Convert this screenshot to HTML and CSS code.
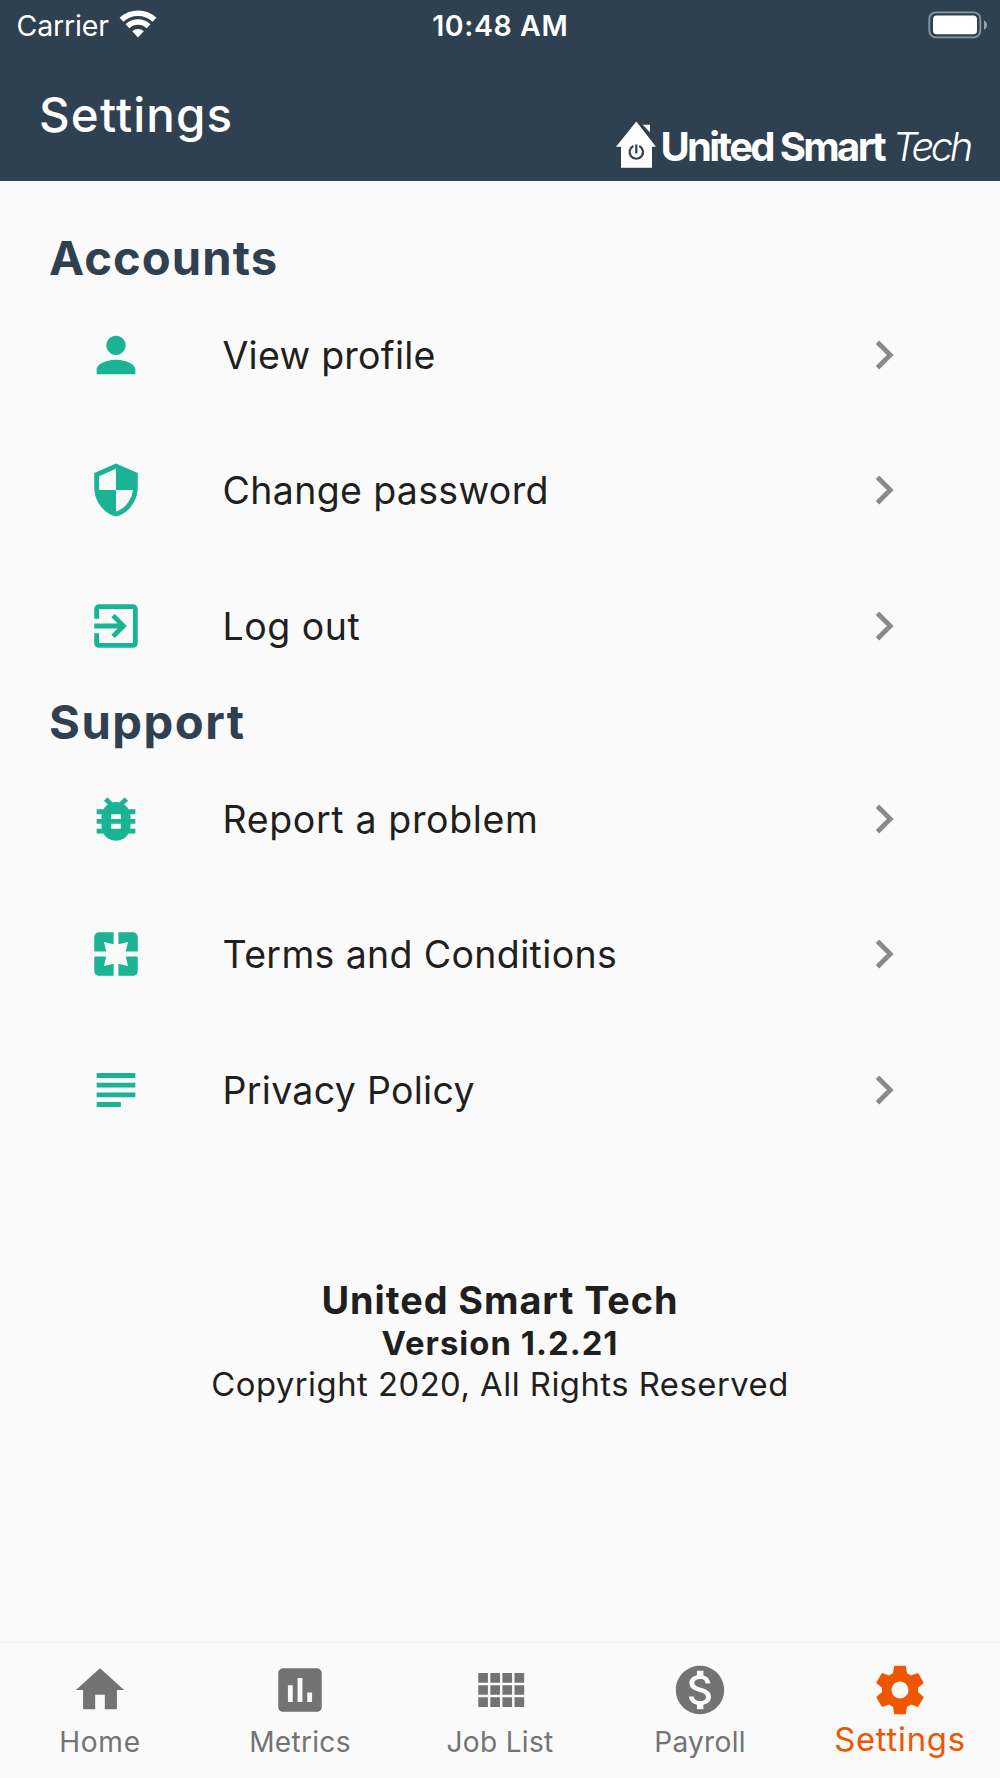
FILE: index.html
```html
<!DOCTYPE html>
<html lang="en">
<head>
<meta charset="utf-8">
<title>Settings</title>
<link rel="stylesheet" href="styles.css">
</head>
<body>
<div class="screen">
  <header class="header">
    <div class="status">
      <div class="status-left">
        <span class="carrier">Carrier</span>
        <svg class="wifi" viewBox="0 0 38 28" aria-hidden="true">
          <path d="M2.5 9.8A24.2 24.2 0 0 1 35.5 9.8M8.5 16.2A15.4 15.4 0 0 1 29.5 16.2" fill="none" stroke="#fff" stroke-width="5.6"/>
          <path d="M19 27.5L13.2 21.3A8.5 8.5 0 0 1 24.8 21.3Z" fill="#fff"/>
        </svg>
      </div>
      <span class="clock">10:48 AM</span>
      <div class="status-right">
        <svg class="battery" viewBox="0 0 60 28" aria-hidden="true">
          <rect x="1.3" y="1.3" width="51" height="25" rx="6.5" fill="none" stroke="#fff" stroke-opacity=".45" stroke-width="1.8"/>
          <rect x="5" y="4.6" width="44" height="18.6" rx="3.8" fill="#fff"/>
          <path d="M56 9.200c4 2 4 7.600 0 9.600z" fill="#fff" fill-opacity=".5"/>
        </svg>
      </div>
    </div>
    <div class="appbar">
      <h1 class="title">Settings</h1>
      <div class="brand">
        <svg class="house" viewBox="0 0 40 47" aria-hidden="true">
          <path d="M20.300.5L40 25.800H36V46.800H5V25.800H0Z" fill="#fff"/>
          <path d="M26.800 3.800H34V11.600Z" fill="#fff"/>
          <path d="M17.400 25A6.700 6.700 0 1 0 23.200 25M20.300 23.500V32.500" fill="none" stroke="#2f4050" stroke-width="2.200"/>
        </svg>
        <span class="brand-name">United Smart</span>
        <span class="brand-tech">Tech</span>
      </div>
    </div>
  </header>

  <main class="content">
    <h2 class="section accounts">Accounts</h2>
    <ul class="list">
      <li class="row">
        <svg class="icon" viewBox="0 0 24 24"><path d="M12 12c2.210 0 4-1.790 4-4s-1.790-4-4-4-4 1.790-4 4 1.790 4 4 4zm0 2c-2.670 0-8 1.340-8 4v2h16v-2c0-2.660-5.330-4-8-4z"/></svg>
        <span class="label view">View profile</span>
        <svg class="chevron" viewBox="0 0 24 24"><path d="M10 6L8.590 7.410 13.170 12l-4.580 4.590L10 18l6-6z"/></svg>
      </li>
      <li class="row">
        <svg class="icon" viewBox="0 0 24 24"><path d="M12 1L3 5v6c0 5.550 3.840 10.740 9 12 5.160-1.260 9-6.450 9-12V5l-9-4zm0 10.990h7c-.53 4.120-3.280 7.790-7 8.940V12H5V6.300l7-3.110v8.800z"/></svg>
        <span class="label change">Change password</span>
        <svg class="chevron" viewBox="0 0 24 24"><path d="M10 6L8.590 7.410 13.170 12l-4.580 4.590L10 18l6-6z"/></svg>
      </li>
      <li class="row">
        <svg class="icon" viewBox="0 0 24 24"><path d="M10.090 15.590L11.500 17l5-5-5-5-1.410 1.410L12.670 11H3v2h9.670l-2.580 2.590zM19 3H5c-1.110 0-2 .9-2 2v4h2V5h14v14H5v-4H3v4c0 1.100.89 2 2 2h14c1.100 0 2-.9 2-2V5c0-1.100-.9-2-2-2z"/></svg>
        <span class="label logout">Log out</span>
        <svg class="chevron" viewBox="0 0 24 24"><path d="M10 6L8.590 7.410 13.170 12l-4.580 4.590L10 18l6-6z"/></svg>
      </li>
    </ul>

    <h2 class="section support">Support</h2>
    <ul class="list">
      <li class="row">
        <svg class="icon" viewBox="0 0 24 24"><path d="M20 8h-2.810c-.45-.78-1.070-1.450-1.820-1.960L17 4.410 15.590 3l-2.170 2.170C12.960 5.060 12.490 5 12 5c-.49 0-.96.06-1.410.17L8.410 3 7 4.410l1.620 1.630C7.880 6.550 7.260 7.220 6.810 8H4v2h2.090c-.05.33-.09.66-.09 1v1H4v2h2v1c0 .34.04.67.09 1H4v2h2.810c1.040 1.790 2.970 3 5.190 3s4.150-1.210 5.190-3H20v-2h-2.090c.05-.33.09-.66.09-1v-1h2v-2h-2v-1c0-.34-.04-.67-.09-1H20V8zm-6 8h-4v-2h4v2zm0-4h-4v-2h4v2z"/></svg>
        <span class="label report">Report a problem</span>
        <svg class="chevron" viewBox="0 0 24 24"><path d="M10 6L8.590 7.410 13.170 12l-4.580 4.590L10 18l6-6z"/></svg>
      </li>
      <li class="row">
        <svg class="icon" viewBox="0 0 24 24"><path d="M3 5v6h5L7 7l4 1V3H5c-1.100 0-2 .9-2 2zm5 8H3v6c0 1.100.9 2 2 2h6v-5l-4 1 1-4zm9 4l-4-1v5h6c1.100 0 2-.9 2-2v-6h-5l1 4zm2-14h-6v5l4-1-1 4h5V5c0-1.100-.9-2-2-2z"/></svg>
        <span class="label terms">Terms and Conditions</span>
        <svg class="chevron" viewBox="0 0 24 24"><path d="M10 6L8.590 7.410 13.170 12l-4.580 4.590L10 18l6-6z"/></svg>
      </li>
      <li class="row">
        <svg class="icon" viewBox="0 0 24 24"><path d="M14 17H4v2h10v-2zm6-8H4v2h16V9zM4 15h16v-2H4v2zM4 5v2h16V5H4z"/></svg>
        <span class="label privacy">Privacy Policy</span>
        <svg class="chevron" viewBox="0 0 24 24"><path d="M10 6L8.590 7.410 13.170 12l-4.580 4.590L10 18l6-6z"/></svg>
      </li>
    </ul>

    <div class="about">
      <p class="about-name">United Smart Tech</p>
      <p class="about-version">Version 1.2.21</p>
      <p class="about-copy">Copyright 2020, All Rights Reserved</p>
    </div>
  </main>

  <nav class="tabs">
    <div class="tab">
      <svg class="tab-icon" viewBox="0 0 24 24"><path d="M10 20v-6h4v6h5v-8h3L12 3 2 12h3v8z"/></svg>
      <span class="tab-label home">Home</span>
    </div>
    <div class="tab">
      <svg class="tab-icon" viewBox="0 0 24 24"><path d="M19 3H5c-1.100 0-2 .9-2 2v14c0 1.100.9 2 2 2h14c1.100 0 2-.9 2-2V5c0-1.100-.9-2-2-2zM9 17H7v-7h2v7zm4 0h-2V7h2v10zm4 0h-2v-4h2v4z"/></svg>
      <span class="tab-label">Metrics</span>
    </div>
    <div class="tab">
      <svg class="tab-icon" viewBox="0 0 24 24"><path d="M3 9h4V5H3v4zm0 5h4v-4H3v4zm5 0h4v-4H8v4zm5 0h4v-4h-4v4zM8 9h4V5H8v4zm5-4v4h4V5h-4zm5 9h4v-4h-4v4zM3 19h4v-4H3v4zm5 0h4v-4H8v4zm5 0h4v-4h-4v4zm5 0h4v-4h-4v4zm0-14v4h4V5h-4z"/></svg>
      <span class="tab-label">Job List</span>
    </div>
    <div class="tab">
      <svg class="tab-icon" viewBox="0 0 24 24"><path d="M12 2C6.480 2 2 6.480 2 12s4.480 10 10 10 10-4.480 10-10S17.520 2 12 2zm1.410 16.090V20h-2.670v-1.930c-1.710-.36-3.160-1.460-3.270-3.400h1.960c.1 1.050.82 1.870 2.650 1.870 1.960 0 2.400-.98 2.400-1.590 0-.83-.44-1.610-2.670-2.140-2.480-.6-4.180-1.620-4.180-3.670 0-1.720 1.390-2.840 3.110-3.210V4h2.670v1.950c1.860.45 2.790 1.860 2.850 3.390H14.300c-.05-1.110-.64-1.870-2.220-1.870-1.500 0-2.400.68-2.400 1.640 0 .84.65 1.390 2.670 1.910s4.180 1.390 4.180 3.910c-.01 1.830-1.380 2.830-3.120 3.160z"/></svg>
      <span class="tab-label">Payroll</span>
    </div>
    <div class="tab active">
      <svg class="tab-icon" viewBox="0 0 24 24"><path d="M19.430 12.980c.04-.32.07-.64.07-.98s-.03-.66-.07-.98l2.110-1.650c.19-.15.24-.42.12-.64l-2-3.460c-.12-.22-.39-.3-.61-.22l-2.490 1c-.52-.4-1.080-.73-1.690-.98l-.38-2.650C14.460 2.180 14.250 2 14 2h-4c-.25 0-.46.18-.49.42l-.38 2.650c-.61.25-1.170.59-1.690.98l-2.490-1c-.23-.09-.49 0-.61.22l-2 3.460c-.13.22-.07.49.12.64l2.110 1.650c-.04.32-.07.65-.07.98s.03.66.07.98l-2.110 1.650c-.19.15-.24.42-.12.64l2 3.460c.12.22.39.3.61.22l2.490-1c.52.4 1.080.73 1.690.98l.38 2.650c.03.24.24.42.49.42h4c.25 0 .46-.18.49-.42l.38-2.650c.61-.25 1.170-.59 1.690-.98l2.490 1c.23.09.49 0 .61-.22l2-3.460c.12-.22.07-.49-.12-.64l-2.110-1.650zM12 15.500c-1.930 0-3.500-1.570-3.500-3.500s1.570-3.500 3.500-3.500 3.500 1.570 3.500 3.500-1.570 3.500-3.500 3.500z"/></svg>
      <span class="tab-label">Settings</span>
    </div>
  </nav>
</div>
</body>
</html>
```
FILE: styles.css
```css
* { box-sizing: border-box; margin: 0; padding: 0; }

body {
  background: #fafafa;
  color: #1f1f1f;
  font-family: Inter, "Liberation Sans", sans-serif;
}

svg { display: block; flex: none; }

.screen {
  width: 1000px;
  height: 1778px;
  display: flex;
  flex-direction: column;
  overflow: hidden;
}

/* Header */
.header {
  height: 181px;
  flex: none;
  background: #2f4050;
  color: #fff;
}

.status {
  height: 50px;
  display: grid;
  grid-template-columns: 1fr auto 1fr;
  align-items: center;
  padding: 1px 12px 0 16.5px;
  font-size: 28.5px;
  line-height: 48px;
}

.status-left { display: flex; align-items: center; gap: 10px; }
.status-right { display: flex; justify-content: flex-end; }
.carrier { letter-spacing: -0.15px; }
.clock { margin-left: -4px; font-weight: 600; letter-spacing: 0.6px; }
.wifi { width: 38px; height: 28px; margin-top: -3px; }
.battery { width: 60px; height: 28px; margin-top: -1px; }

.appbar {
  height: 131px;
  display: flex;
  justify-content: space-between;
  padding: 0 30px 0 39px;
}

.title {
  font-size: 47.5px;
  font-weight: 500;
  line-height: 129px;
  letter-spacing: 1.15px;
}

.brand {
  align-self: flex-end;
  display: flex;
  align-items: flex-end;
  height: 47px;
  margin-bottom: 13.5px;
  line-height: 43px;
  white-space: nowrap;
}

.house { width: 40px; height: 47px; }

.brand-name {
  margin-left: 4.5px;
  font-size: 40px;
  font-weight: 700;
  letter-spacing: -2.65px;
}

.brand-tech {
  margin-left: 8.5px;
  font-size: 40px;
  font-style: italic;
  font-weight: 300;
  letter-spacing: -3.4px;
}

/* Settings list */
.content { flex: 1; padding-top: 48.3px; }

.section {
  height: 58.1px;
  padding-left: 49px;
  color: #2f4050;
  font-size: 47.2px;
  font-weight: 700;
  line-height: 57.5px;
}

.accounts { letter-spacing: 1.05px; }
.support { letter-spacing: 1.5px; }

.list { list-style: none; }

.row {
  height: 135.3px;
  display: flex;
  align-items: center;
  padding: 0 87px;
}

.icon { width: 58px; height: 58px; fill: #1ab394; }

.label {
  flex: 1;
  padding: 2px 0 0 77.5px;
  font-size: 37.5px;
  line-height: 48px;
}

.view { letter-spacing: 0.25px; }
.change { letter-spacing: 0.35px; }
.logout { letter-spacing: 0.5px; }
.report { letter-spacing: 0.65px; }
.terms { letter-spacing: 0.35px; }
.privacy { letter-spacing: 0.3px; }

.chevron { width: 58px; height: 58px; fill: #8a8a8a; }

/* Version block */
.about { padding-top: 121px; text-align: center; }

.about-name {
  font-size: 37.8px;
  font-weight: 650;
  line-height: 45.4px;
  letter-spacing: 0.95px;
}

.about-version {
  font-size: 32.8px;
  font-weight: 650;
  line-height: 38.5px;
  letter-spacing: 1.05px;
}

.about-copy {
  font-size: 32.8px;
  line-height: 44px;
  letter-spacing: 0.49px;
}

/* Bottom tabs */
.tabs {
  height: 135px;
  flex: none;
  display: grid;
  grid-template-columns: repeat(5, 1fr);
  box-shadow: 0 -1px 4px rgba(0, 0, 0, 0.07);
  background: #fafafa;
  color: #737373;
}

.tab {
  display: flex;
  flex-direction: column;
  align-items: center;
  padding-top: 18px;
}

.tab-icon { width: 58px; height: 58px; fill: currentColor; }

.tab-label {
  font-size: 28.1px;
  line-height: 46px;
  letter-spacing: 0.28px;
}

.home { letter-spacing: 0.7px; }

.active { color: #f05500; }

.active .tab-label {
  font-size: 32.8px;
  line-height: 40px;
  letter-spacing: 0.75px;
}
```
